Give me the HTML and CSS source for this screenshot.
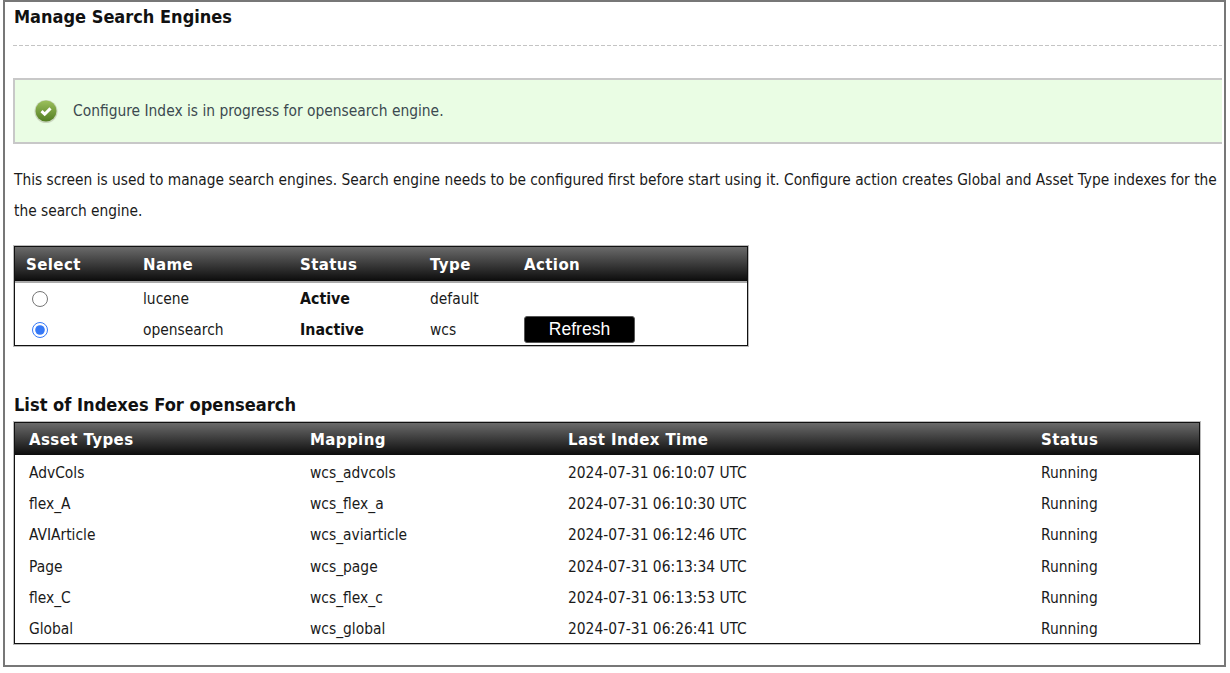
FILE: index.html
```html
<!DOCTYPE html>
<html lang="en">
<head>
<meta charset="utf-8">
<title>Manage Search Engines</title>
<link rel="stylesheet" href="styles.css">
</head>
<body>
<main class="frame">
  <h1 class="page-title">Manage Search Engines</h1>
  <div class="message">
    <svg class="ok-icon" width="24" height="24" viewBox="0 0 24 24" aria-hidden="true">
      <defs>
        <linearGradient id="okg" x1="0" y1="0" x2="0" y2="1">
          <stop offset="0" stop-color="#9cc05c"/>
          <stop offset="1" stop-color="#527d22"/>
        </linearGradient>
      </defs>
      <circle cx="12" cy="12.5" r="11.5" fill="#c9d6bd"/>
      <circle cx="12" cy="12" r="10.5" fill="url(#okg)"/>
      <path d="M7.5 12.2l3.2 3 5.8-5.8" fill="none" stroke="#fff" stroke-width="3"/>
    </svg>
    <span>Configure Index is in progress for opensearch engine.</span>
  </div>
  <p class="intro">This screen is used to manage search engines. Search engine needs to be configured first before start using it. Configure action creates Global and Asset Type indexes for the<br>the search engine.</p>
  <table class="grid engines">
    <thead>
      <tr><th class="e1">Select</th><th class="e2">Name</th><th class="e3">Status</th><th class="e4">Type</th><th>Action</th></tr>
    </thead>
    <tbody>
      <tr><td><input class="radio" type="radio" name="engine"></td><td>lucene</td><td class="strong">Active</td><td>default</td><td></td></tr>
      <tr><td><input class="radio" type="radio" name="engine" checked></td><td>opensearch</td><td class="strong">Inactive</td><td>wcs</td><td><button class="refresh" type="button">Refresh</button></td></tr>
    </tbody>
  </table>
  <h2 class="list-title">List of Indexes For opensearch</h2>
  <table class="grid indexes">
    <thead>
      <tr><th class="i1">Asset Types</th><th class="i2">Mapping</th><th class="i3">Last Index Time</th><th>Status</th></tr>
    </thead>
    <tbody>
      <tr><td>AdvCols</td><td>wcs_advcols</td><td>2024-07-31 06:10:07 UTC</td><td>Running</td></tr>
      <tr><td>flex_A</td><td>wcs_flex_a</td><td>2024-07-31 06:10:30 UTC</td><td>Running</td></tr>
      <tr><td>AVIArticle</td><td>wcs_aviarticle</td><td>2024-07-31 06:12:46 UTC</td><td>Running</td></tr>
      <tr><td>Page</td><td>wcs_page</td><td>2024-07-31 06:13:34 UTC</td><td>Running</td></tr>
      <tr><td>flex_C</td><td>wcs_flex_c</td><td>2024-07-31 06:13:53 UTC</td><td>Running</td></tr>
      <tr><td>Global</td><td>wcs_global</td><td>2024-07-31 06:26:41 UTC</td><td>Running</td></tr>
    </tbody>
  </table>
</main>
</body>
</html>
```
FILE: styles.css
```css
* { box-sizing: border-box; }
html, body { margin: 0; padding: 0; background: #fff; }
body {
  font-family: "DejaVu Sans", "Liberation Sans", sans-serif;
  font-stretch: condensed;
  font-size: 15.3px;
  color: #1a1a1a;
  overflow: hidden;
}
.frame {
  margin-left: 3px;
  width: 1223px;
  height: 667px;
  border: 2px solid #777;
  padding: 0 2px 0 8px;
  overflow: hidden;
}
.page-title {
  margin: 0;
  height: 44px;
  padding: 4px 0 0 1px;
  font-size: 18px;
  line-height: 22px;
  font-weight: 700;
  color: #111;
  background: repeating-linear-gradient(90deg, #c4c4c4 0 4px, transparent 4px 6px) left bottom / 100% 1px no-repeat;
}
.message {
  display: flex;
  align-items: center;
  margin-top: 32px;
  height: 66px;
  padding-left: 19px;
  gap: 15px;
  background: #eafde4;
  border: 2px solid #c8c8c8;
  border-right: 0;
  color: #3c4a50;
  font-size: 15.4px;
}
.ok-icon { flex: none; }
.intro {
  margin: 21px 0 0 1px;
  font-size: 15.32px;
  line-height: 31px;
  white-space: nowrap;
  color: #1a1a1a;
}
.grid {
  border-collapse: separate;
  border-spacing: 0;
  margin-left: 1px;
  background: #fff;
  border: 1px solid #111;
  box-shadow: 0 0 0 1px rgba(60, 60, 60, 0.35);
  table-layout: fixed;
}
.grid th {
  text-align: left;
  color: #fff;
  font-size: 15px;
  font-stretch: normal;
  letter-spacing: 0.4px;
  font-weight: 700;
  background: linear-gradient(#6a6a6a, #0c0c0c);
  padding: 0;
}
.grid td { padding: 0; font-size: 15.4px; }
.engines { width: 734px; margin-top: 19px; }
.engines thead tr { height: 36px; }
.engines th { border-bottom: 2px solid #aaa; padding-top: 1px; vertical-align: middle; }
.engines tbody tr { height: 31px; }
.engines th:first-child { padding-left: 11px; }
.e1 { width: 128px; }
.e2 { width: 157px; }
.e3 { width: 130px; }
.e4 { width: 94px; }
.grid .strong { font-weight: 700; font-size: 15.8px; color: #111; }
.radio {
  display: block;
  margin: 0 0 0 17px;
  width: 16px;
  height: 16px;
  accent-color: #3578f6;
}
.refresh {
  display: block;
  width: 111px;
  height: 27px;
  padding: 0;
  background: #000;
  color: #fff;
  border: 1px solid #555;
  border-radius: 3px;
  font-family: "Liberation Sans", sans-serif;
  font-size: 17.5px;
}
.list-title {
  margin: 47px 0 0 1px;
  height: 29px;
  font-size: 18.1px;
  line-height: 24px;
  font-weight: 700;
  color: #111;
}
.indexes { width: 1186px; margin-top: 0; }
.indexes thead tr { height: 32px; }
.grid.indexes th { padding-top: 2px; }
.indexes tbody tr { height: 31.33px; }
.grid.indexes td { padding-top: 4px; }
.indexes th:first-child, .indexes td:first-child { padding-left: 14px; }
.i1 { width: 295px; }
.i2 { width: 258px; }
.i3 { width: 473px; }
```
